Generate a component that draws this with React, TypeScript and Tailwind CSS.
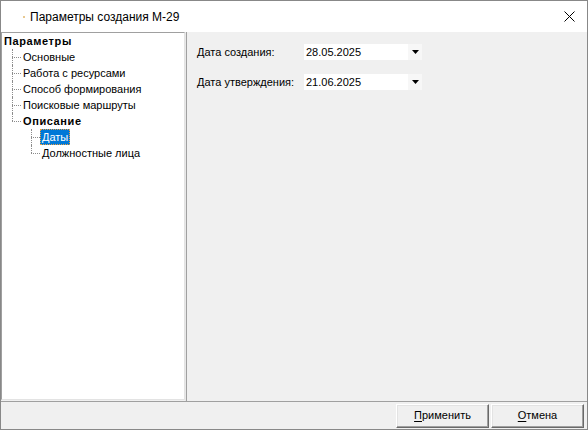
import React from 'react';

type Node = { label: string; level: number; bold?: boolean; selected?: boolean; last?: boolean };

const nodes: Node[] = [
  { label: 'Параметры', level: 0, bold: true },
  { label: 'Основные', level: 1 },
  { label: 'Работа с ресурсами', level: 1 },
  { label: 'Способ формирования', level: 1 },
  { label: 'Поисковые маршруты', level: 1 },
  { label: 'Описание', level: 1, bold: true, last: true },
  { label: 'Даты', level: 2, selected: true },
  { label: 'Должностные лица', level: 2, last: true },
];

// dotted connector, like the classic Win32 tree view
const Connector = ({ last }: { last?: boolean }) => (
  <div className="relative w-[9px] h-full shrink-0">
    <div className={`absolute left-0 top-0 border-l border-dotted border-[#8c8c8c] ${last ? 'h-[8px]' : 'h-full'}`} />
    <div className="absolute left-0 top-[8px] w-[9px] border-t border-dotted border-[#8c8c8c]" />
  </div>
);

const TreeRow = ({ node }: { node: Node }) => (
  <div className="flex h-[16px] items-stretch">
    {node.level > 0 && (
      <>
        <div className={node.level === 1 ? 'w-[10px] shrink-0' : 'w-[29px] shrink-0'} />
        <Connector last={node.last} />
      </>
    )}
    <div
      className={
        node.selected
          ? 'px-[2px] bg-[#0078d7] text-white outline outline-1 outline-dotted outline-[#f0a040] -outline-offset-1 flex items-center'
          : 'px-[2px] flex items-center'
      }
    >
      <span className={node.bold ? 'font-bold tracking-[0.6px]' : ''}>{node.label}</span>
    </div>
  </div>
);

const DateField = ({ label, value }: { label: string; value: string }) => (
  <div className="flex items-center h-[16px]">
    <span className="w-[107px] shrink-0">{label}</span>
    <div className="w-[118px] h-[16px] bg-white flex items-center justify-between">
      <span className="pl-[2px]">{value}</span>
      <div className="w-[14px] h-[16px] bg-[#f7f7f7] flex items-center justify-center">
        <svg width="7" height="4" viewBox="0 0 7 4">
          <polygon points="0,0 7,0 3.5,4" fill="#000" />
        </svg>
      </div>
    </div>
  </div>
);

const WinButton = ({ accel, rest }: { accel: string; rest: string }) => (
  <button className="w-[93px] h-[24px] bg-[#f0f0f0] border border-t-white border-l-white border-r-[#696969] border-b-[#696969] shadow-[inset_-1px_-1px_0_#a0a0a0,inset_1px_1px_0_#e3e3e3] text-[11px] text-black">
    <span className="underline underline-offset-2">{accel}</span>
    {rest}
  </button>
);

export default function App() {
  return (
    <div className="w-[588px] h-[430px] border border-[#888888] bg-[#f0f0f0] flex flex-col font-['Liberation_Sans',Arial,sans-serif] text-[11px] text-black overflow-hidden">
      {/* Title bar */}
      <div className="h-[31px] bg-white flex items-center shrink-0">
        <div className="w-[29px] flex justify-end pr-[5px]">
          <span className="w-[2px] h-[2px] bg-[#e8c890]" />
        </div>
        <span className="text-[12px] text-black">Параметры создания М-29</span>
        <div className="flex-1" />
        <svg width="11" height="11" viewBox="0 0 11 11" className="mr-[12px]">
          <path d="M0.5 0.5 L10.5 10.5 M10.5 0.5 L0.5 10.5" stroke="#000" strokeWidth="1" />
        </svg>
      </div>

      {/* Body */}
      <div className="flex flex-1 min-h-0">
        <div className="w-[184px] shrink-0 pb-[1px] flex flex-col">
          <div className="flex-1 bg-white border-t border-l border-[#a0a0a0] border-r-[#e3e3e3] border-b-[#e3e3e3] border-r border-b">
            {nodes.map((n) => (
              <TreeRow key={n.label} node={n} />
            ))}
          </div>
        </div>
        <div className="w-px bg-[#e8e8e8] shrink-0" />
        <div className="w-px bg-[#a0a0a0] shrink-0" />
        <div className="flex-1 pt-[12px] pl-[10px] flex flex-col gap-[14px]">
          <DateField label="Дата создания:" value="28.05.2025" />
          <DateField label="Дата утверждения:" value="21.06.2025" />
        </div>
      </div>

      {/* Buttons */}
      <div className="h-[28px] shrink-0 border-t border-[#a0a0a0] flex items-center justify-end gap-[2px] pr-[3px]">
        <WinButton accel="П" rest="рименить" />
        <WinButton accel="О" rest="тмена" />
      </div>
    </div>
  );
}
